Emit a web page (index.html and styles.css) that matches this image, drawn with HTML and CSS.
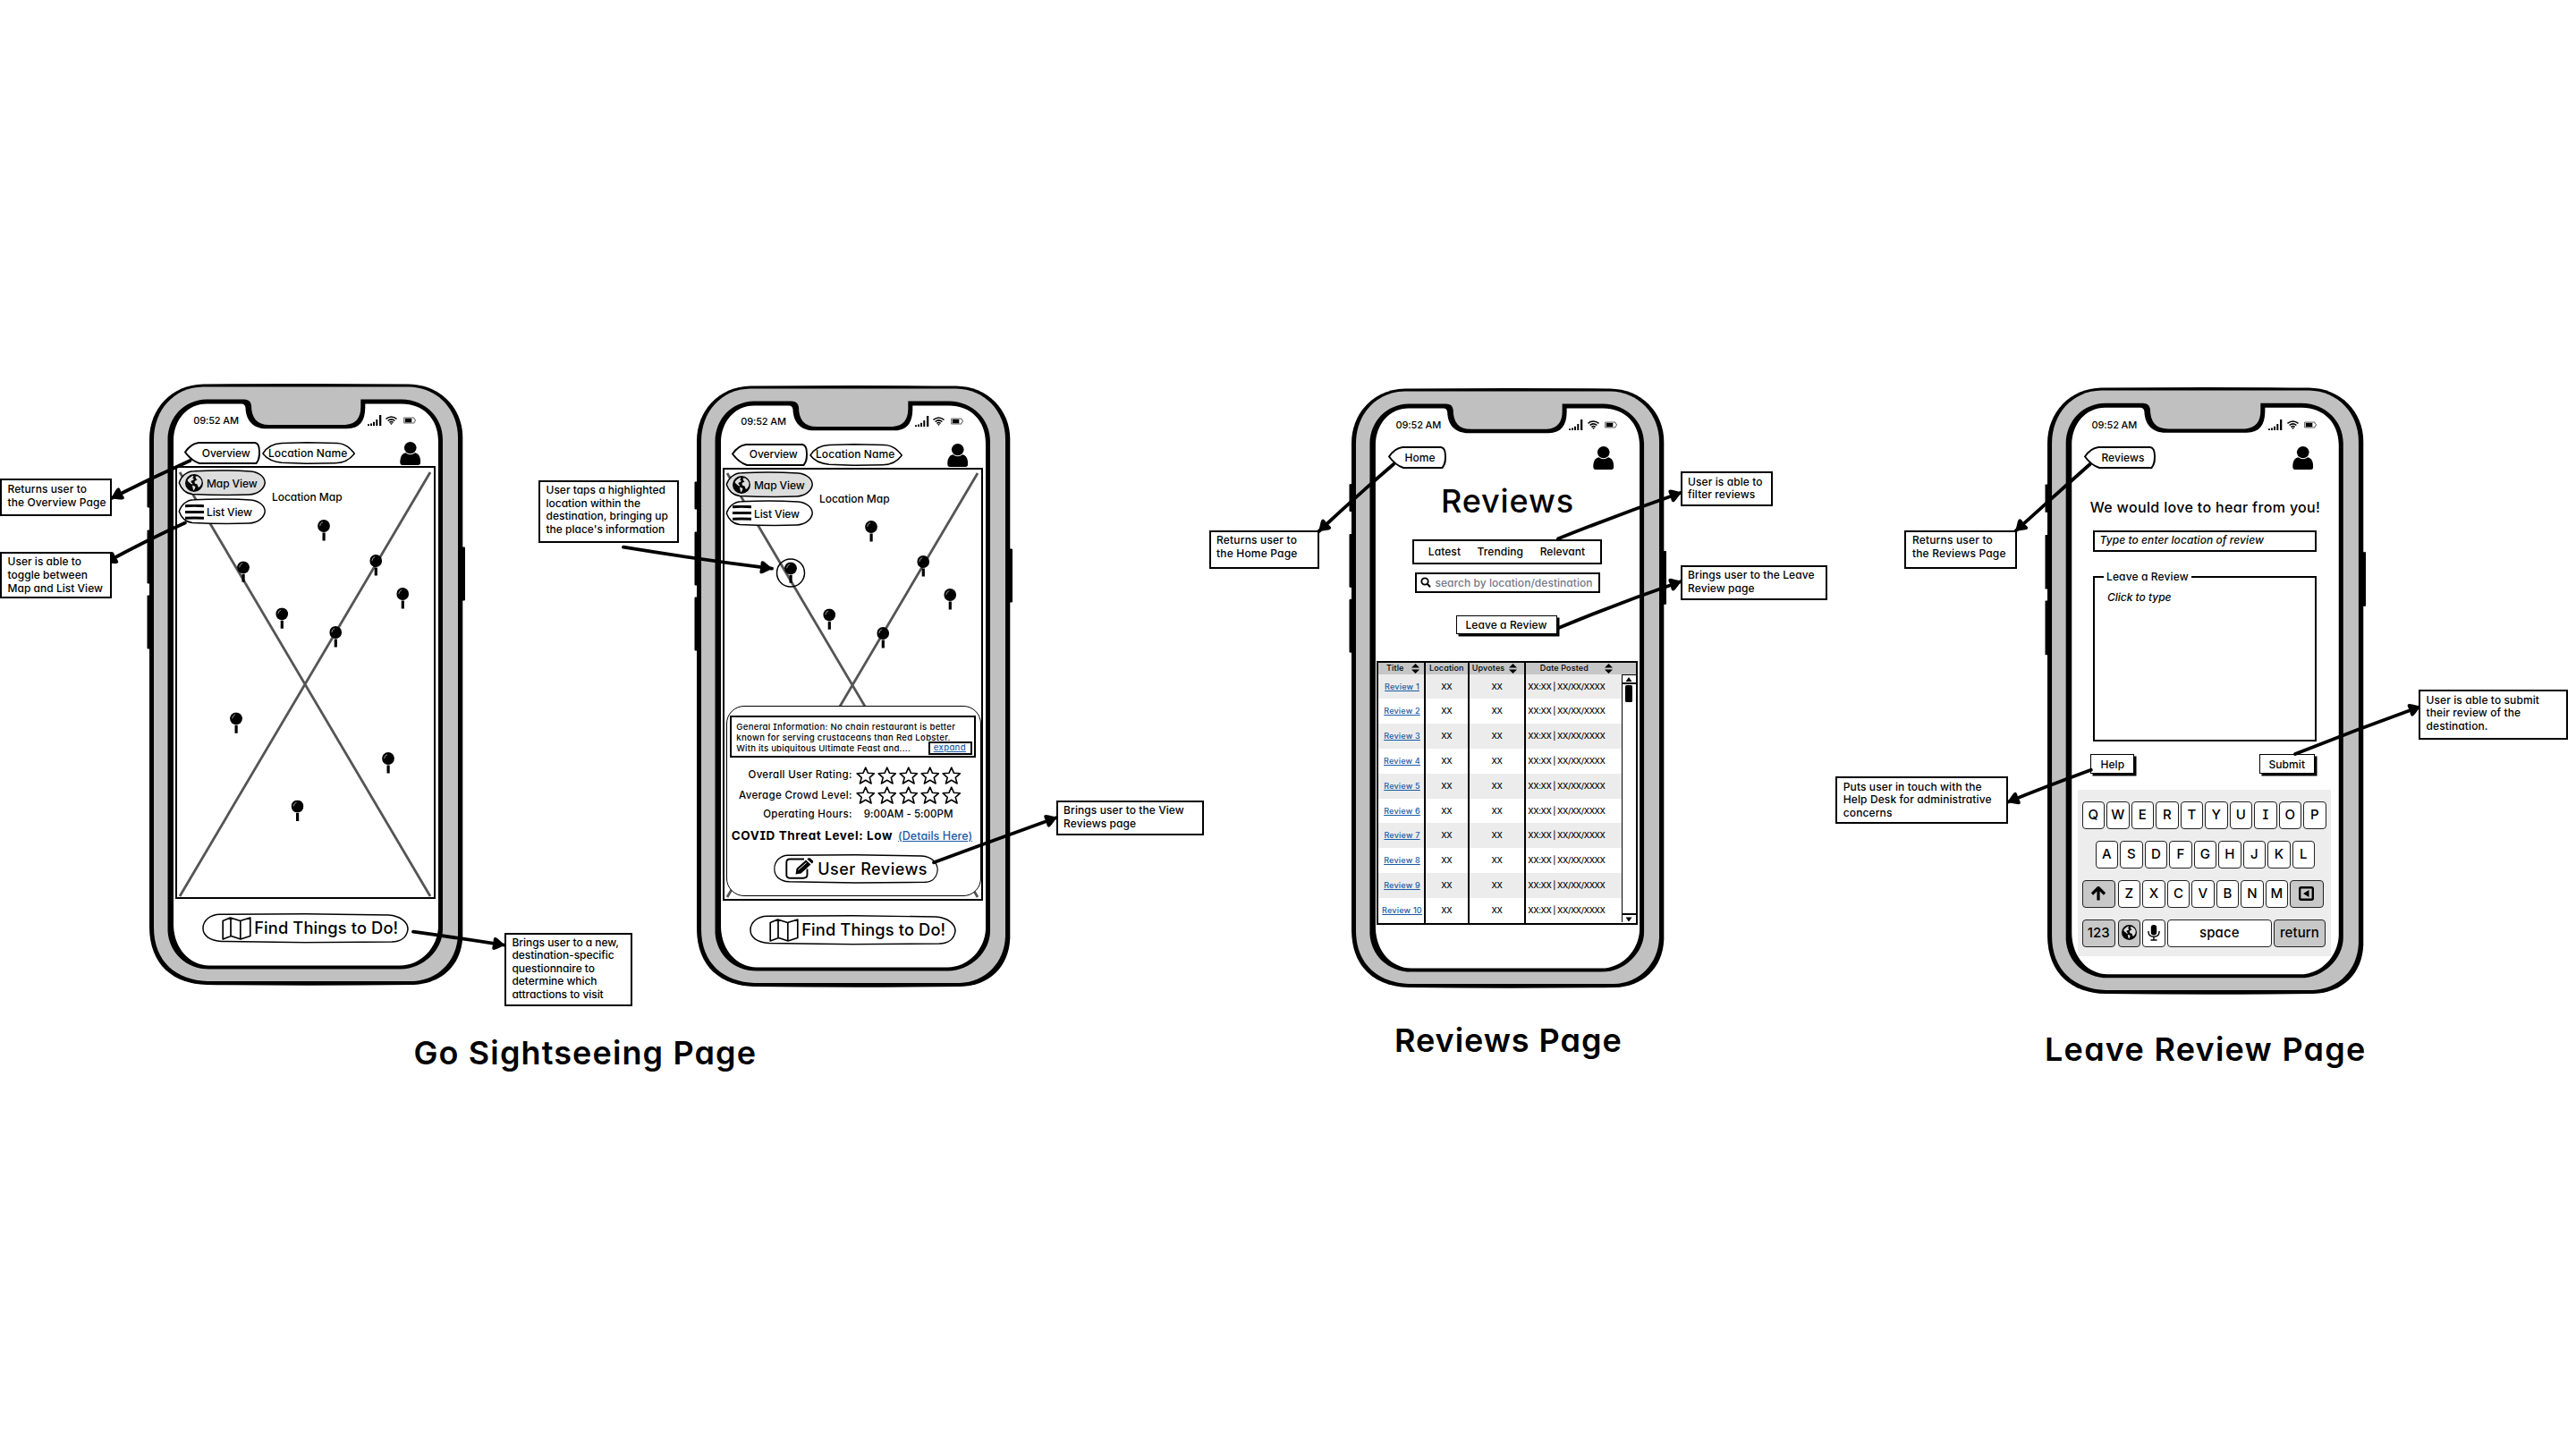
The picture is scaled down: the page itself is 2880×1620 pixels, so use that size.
FILE: index.html
```html
<!DOCTYPE html>
<html lang="en">
<head>
<meta charset="utf-8">
<title>Travel app wireframes</title>
<link rel="stylesheet" href="styles.css">
</head>
<body>
<svg class="defs" aria-hidden="true">
  <symbol id="frame" viewBox="0 0 356 673" preserveAspectRatio="none">
    <path d="M1 108h4v30H1zM1 164h4v59H1zM1 237h4v59H1zM351 183h4.5v59H351z" stroke="#000" stroke-linejoin="round"/>
    <path d="M63 .5 Q178 -.5 293 .5C328 1 353.300 27 353.300 60V618C352 650 330 671 298 672Q178 673.500 67 672C30 671 3.500 650 3 608V62C3 28 28 1 63 .5Z"/>
    <path fill="#c0c0c0" d="M63 3.500H293C325 4 348 29 348 60V616C347 645 326 667 297 668H68C33 667 8 646 8 608V62C8 30 30 4 63 3.500Z"/>
    <path d="M67 17.500H109Q116 17.500 117 24C117 38 123 46 137 46H222C234 45 239.300 38 239.300 26V17.500H285C312 18 331 38 331 62V610C331 633 309 654.500 284 654.500H70C44 654.500 25 636 23.500 612V62C24 37 42 18 67 17.500Z"/>
    <path fill="#fff" d="M67 22.500H106Q110 22.500 110.500 27C111 42 120 50.300 134 50.300H224C238 50 244 42 244.300 27V22.500H285C309 22.500 326 39 326 64V608C325 630 307 650.500 283 650.500H70C48 650 31 632 30 606V64C30 40 46 22.500 67 22.500Z"/>
  </symbol>
  <symbol id="signal" viewBox="0 0 16 12"><path d="M0 10.300h2V12H0zM3 9.600h2V12H3zM6 7.800h2V12H6zM9.300 5h2v7h-2zM13 0h2.300v12H13z"/></symbol>
  <symbol id="wifi" viewBox="0 0 13 10"><path d="M.5 3.300Q6.500 -1.500 12.500 3.300M2.600 5.500Q6.500 2.200 10.400 5.500M4.400 7.400Q6.500 5.800 8.600 7.400" fill="none" stroke="#000" stroke-width="1.500"/><path d="M5 8.300h3L6.500 9.900z"/></symbol>
  <symbol id="battery" viewBox="0 0 14 8"><path d="M.6 1H12V2.500Q13.500 2.500 13.500 4T12 5.500V7H.6Z" fill="none" stroke="#555" stroke-width=".9"/><path d="M1.800 1.800h7.500v4.500H1.800z"/></symbol>
  <symbol id="user" viewBox="0 0 24 26" preserveAspectRatio="none"><ellipse cx="12" cy="6.600" rx="7" ry="6.600"/><path d="M6.500 12.300Q12 16 17.500 12.300C21.500 13 23.800 17 23.700 23Q23.600 26 21 26H3Q.4 26 .3 23C.2 17 2.500 13 6.500 12.300Z"/></symbol>
  <symbol id="globe" viewBox="0 0 20 20"><circle cx="10" cy="10" r="10"/><path fill="#ddd" d="M5 4L8.500 1.800L9.500 3L8 4.500L10 5.500L8 7.500L7 7L6.500 9L8.500 11L7 11.500L3.500 8.500L2.500 6.800ZM11.500 2.500L14 2.500L17 5L18.500 8L18.300 11L16.500 14L14.800 15L13.500 11.500L10.800 10.500L10.500 8L13.500 6.500L12 5ZM8 12.500L11.500 14L10.500 17L9.500 18.500L8.500 16Z"/></symbol>
  <symbol id="list" viewBox="0 0 21 17"><path d="M0 1.700Q10 .8 21 1.700M0 8.500H21M0 15.300Q10 14.600 21 15.300" fill="none" stroke="#000" stroke-width="3"/></symbol>
  <symbol id="map" viewBox="0 0 33 26" preserveAspectRatio="none"><path d="M1.200 4.500L9.500 1L20.500 4.500L31.800 1V21.500L21 25L10.500 21.500L1.200 25ZM10 1V21.500M20.800 4.500V25" fill="none" stroke="#000" stroke-width="1.700" stroke-linejoin="round"/></symbol>
  <symbol id="edit" viewBox="0 0 32 24" preserveAspectRatio="none"><path d="M21 1.500H5Q1.300 1.500 1.300 5V19Q1.300 22.700 5 22.700H20Q24.500 22.700 24.500 19V12.500" fill="none" stroke="#000" stroke-width="1.900"/><path d="M11.500 18.500L12.500 12L23 2.500L28.500 7.500L17.500 17.500ZM24.300 1.500Q26 -.4 28 .6L31 3.500Q31.800 5 29.800 6.600Z"/><path d="M14.500 13.500L23.500 5.500" stroke="#fff" stroke-width="1"/></symbol>
  <symbol id="star" viewBox="0 0 22 20" preserveAspectRatio="none"><path d="M11 1.200L13.800 7.300L20.800 7.800L15.600 12.300L17.500 19L11 15.300L4.500 19L6.400 12.300L1.200 7.800L8.200 7.300Z" fill="none" stroke="#000" stroke-width="1.600" stroke-linejoin="round"/></symbol>
  <symbol id="pin" viewBox="0 0 14 24"><ellipse cx="7" cy="7" rx="6.900" ry="6.900"/><path d="M5.500 14.500h3.200V23.500h-3.200z"/><path d="M2.600 7Q3 3.500 6 2.600" fill="none" stroke="#aaa" stroke-width=".9"/></symbol>
  <symbol id="search" viewBox="0 0 12 12"><circle cx="5" cy="5" r="3.700" fill="none" stroke="#000" stroke-width="1.800"/><path d="M7.500 7.500L11 11.300" stroke="#000" stroke-width="2"/></symbol>
  <symbol id="sort" viewBox="0 0 9 11" preserveAspectRatio="none"><path d="M4.500 0L9 4.500H0ZM0 6.500H9L4.500 11Z"/></symbol>
  <symbol id="shift" viewBox="0 0 18 16"><path d="M9 1V15.500M2 8.500L9 1.500L16 8.500" fill="none" stroke="#000" stroke-width="3.200" stroke-linejoin="round"/></symbol>
  <symbol id="erase" viewBox="0 0 17 16" preserveAspectRatio="none"><rect x="1.200" y="1.200" width="14.600" height="13.600" rx="1.500" fill="none" stroke="#000" stroke-width="2.400"/><path d="M11.500 4V12L5 8Z"/></symbol>
  <symbol id="mic" viewBox="0 0 14 18"><rect x="3.800" y="0" width="6.400" height="11.500" rx="3.200"/><path d="M1 7V8.500Q1.500 13.200 7 13.200T13 8.500V7M7 13V16.500M3.500 17H10.500" fill="none" stroke="#000" stroke-width="1.400"/></symbol>
  <symbol id="shape-name" viewBox="0 0 104 25"><path d="M1 13C4 8 9 2 22 1.500L50 .8L84 1.500C94 2 99 8 103.300 13C99 19 92 23.500 82 23.700L50 24.300L22 23.300C11 22 5 19 1 13Z" fill="#fff" stroke="#000" stroke-width="1.500"/></symbol>
  <symbol id="shape-back" viewBox="0 0 85 25"><path d="M1 11.500C4 7 9 2 16 1L79 1C83 1.500 84 5 84 11C84 16 84 20 80.500 24L17 24C11 22 5 17 1 11.500Z" fill="#fff" stroke="#000" stroke-width="1.900"/></symbol>
  <symbol id="shape-home" viewBox="0 0 65 25"><path d="M1 11.500C4 7 9 2 16 1L59 1C63 1.500 64 5 64 11C64 16 64 20 60.500 24L17 24C11 22 5 17 1 11.500Z" fill="#fff" stroke="#000" stroke-width="1.900"/></symbol>
  <symbol id="shape-reviews" viewBox="0 0 80 25"><path d="M1 11.500C4 7 9 2 16 1L74 1C78 1.500 79 5 79 11C79 16 79 20 75.500 24L17 24C11 22 5 17 1 11.500Z" fill="#fff" stroke="#000" stroke-width="1.900"/></symbol>
  <symbol id="shape-tab" viewBox="0 0 99 30"><path d="M1 15C3 8 9 2 18 1.800Q50 0 82 2C92 3 98 9 98 15C97 22 90 28 80 28.300Q50 29.500 16 27.700C8 27 3 21 1 15Z" stroke="#000" stroke-width="1.500"/></symbol>
  <symbol id="shape-cta" viewBox="0 0 231 34" preserveAspectRatio="none"><path d="M1 17C1 8 9 1.500 20 1.300L115 .8L208 2C222 3 230 10 230 18C229 27 222 32 212 32.300L115 33L22 31.700C8 31 1 25 1 17Z" fill="#fff" stroke="#000" stroke-width="1.500"/></symbol>
  <symbol id="pins" viewBox="0 0 290 484">
    <path d="M5 6L285 480M285 6L5 480" stroke="#555" stroke-width="2.800"/>
    <use href="#pin" x="159" y="59" width="14" height="24"/>
    <use href="#pin" x="69" y="105.300" width="14" height="24"/>
    <use href="#pin" x="217.200" y="98" width="14" height="24"/>
    <use href="#pin" x="247.200" y="135" width="14" height="24"/>
    <use href="#pin" x="112.200" y="157.300" width="14" height="24"/>
    <use href="#pin" x="172.200" y="178" width="14" height="24"/>
    <use href="#pin" x="61" y="274.300" width="14" height="24"/>
    <use href="#pin" x="231" y="319" width="14" height="24"/>
    <use href="#pin" x="129.500" y="372.500" width="14" height="24"/>
  </symbol>
</svg>

<main class="board">

  <section class="phone phone-map">
    <svg class="frame"><use href="#frame"/></svg>
    <div class="status"><span>09:52 AM</span><svg class="i-signal"><use href="#signal"/></svg><svg class="i-wifi"><use href="#wifi"/></svg><svg class="i-battery"><use href="#battery"/></svg></div>
    <nav class="nav">
      <a class="shaped back"><svg><use href="#shape-back"/></svg><span>Overview</span></a>
      <a class="shaped place"><svg><use href="#shape-name"/></svg><span>Location Name</span></a>
      <svg class="i-user"><use href="#user"/></svg>
    </nav>
    <div class="map">
      <svg class="pins"><use href="#pins"/></svg>
      <a class="shaped view active"><svg><use href="#shape-tab"/></svg><svg class="i-globe"><use href="#globe"/></svg><span>Map View</span></a>
      <a class="shaped view"><svg><use href="#shape-tab"/></svg><svg class="i-list"><use href="#list"/></svg><span>List View</span></a>
      <span class="map-label">Location Map</span>
    </div>
    <a class="shaped cta"><svg><use href="#shape-cta"/></svg><svg class="i-map"><use href="#map"/></svg><span>Find Things to Do!</span></a>
  </section>

  <section class="phone phone-place">
    <svg class="frame"><use href="#frame"/></svg>
    <div class="status"><span>09:52 AM</span><svg class="i-signal"><use href="#signal"/></svg><svg class="i-wifi"><use href="#wifi"/></svg><svg class="i-battery"><use href="#battery"/></svg></div>
    <nav class="nav">
      <a class="shaped back"><svg><use href="#shape-back"/></svg><span>Overview</span></a>
      <a class="shaped place"><svg><use href="#shape-name"/></svg><span>Location Name</span></a>
      <svg class="i-user"><use href="#user"/></svg>
    </nav>
    <div class="map">
      <svg class="pins"><use href="#pins"/><circle cx="76" cy="117.500" r="15.500" fill="none" stroke="#000" stroke-width="1.500"/></svg>
      <a class="shaped view active"><svg><use href="#shape-tab"/></svg><svg class="i-globe"><use href="#globe"/></svg><span>Map View</span></a>
      <a class="shaped view"><svg><use href="#shape-tab"/></svg><svg class="i-list"><use href="#list"/></svg><span>List View</span></a>
      <span class="map-label">Location Map</span>
      <div class="sheet">
        <div class="info">
          <p class="l1">General Information: No chain restaurant is better</p>
          <p class="l2">known for serving crustaceans than Red Lobster.</p>
          <p class="l3">With its ubiquitous Ultimate Feast and....</p>
          <a class="expand">expand</a>
        </div>
        <div class="rate"><span class="rate-name">Overall User Rating:</span><span class="stars"><svg><use href="#star"/></svg><svg><use href="#star"/></svg><svg><use href="#star"/></svg><svg><use href="#star"/></svg><svg><use href="#star"/></svg></span></div>
        <div class="rate"><span class="rate-name">Average Crowd Level:</span><span class="stars"><svg><use href="#star"/></svg><svg><use href="#star"/></svg><svg><use href="#star"/></svg><svg><use href="#star"/></svg><svg><use href="#star"/></svg></span></div>
        <div class="rate hours"><span class="rate-name">Operating Hours:</span><span class="time">9:00AM - 5:00PM</span></div>
        <div class="covid"><b>COVID Threat Level: Low</b><a class="link">(Details Here)</a></div>
        <a class="shaped user-reviews"><svg><use href="#shape-cta"/></svg><svg class="i-edit"><use href="#edit"/></svg><span>User Reviews</span></a>
      </div>
    </div>
    <a class="shaped cta"><svg><use href="#shape-cta"/></svg><svg class="i-map"><use href="#map"/></svg><span>Find Things to Do!</span></a>
  </section>

  <section class="phone phone-reviews">
    <svg class="frame"><use href="#frame"/></svg>
    <div class="status"><span>09:52 AM</span><svg class="i-signal"><use href="#signal"/></svg><svg class="i-wifi"><use href="#wifi"/></svg><svg class="i-battery"><use href="#battery"/></svg></div>
    <nav class="nav">
      <a class="shaped home"><svg><use href="#shape-home"/></svg><span>Home</span></a>
      <svg class="i-user"><use href="#user"/></svg>
    </nav>
    <h1 class="title">Reviews</h1>
    <div class="tabs"><span>Latest</span><span>Trending</span><span>Relevant</span></div>
    <div class="search"><svg><use href="#search"/></svg><span>search by location/destination</span></div>
    <button class="btn leave">Leave a Review</button>
    <table class="reviews">
      <colgroup><col class="c-title"><col class="c-loc"><col class="c-up"><col class="c-date"><col class="c-bar"></colgroup>
      <thead><tr><th><div class="th t1">Title<svg><use href="#sort"/></svg></div></th><th>Location</th><th><div class="th t2">Upvotes<svg><use href="#sort"/></svg></div></th><th class="open"><div class="th t3">Date Posted<svg><use href="#sort"/></svg></div></th><th class="open"></th></tr></thead>
      <tbody>
        <tr><td><a class="link">Review 1</a></td><td>XX</td><td>XX</td><td class="date">XX:XX | XX/XX/XXXX</td><td class="bar" rowspan="10"><div class="scroll"><i class="up"></i><i class="thumb"></i><i class="down"></i></div></td></tr>
        <tr><td><a class="link">Review 2</a></td><td>XX</td><td>XX</td><td class="date">XX:XX | XX/XX/XXXX</td></tr>
        <tr><td><a class="link">Review 3</a></td><td>XX</td><td>XX</td><td class="date">XX:XX | XX/XX/XXXX</td></tr>
        <tr><td><a class="link">Review 4</a></td><td>XX</td><td>XX</td><td class="date">XX:XX | XX/XX/XXXX</td></tr>
        <tr><td><a class="link">Review 5</a></td><td>XX</td><td>XX</td><td class="date">XX:XX | XX/XX/XXXX</td></tr>
        <tr><td><a class="link">Review 6</a></td><td>XX</td><td>XX</td><td class="date">XX:XX | XX/XX/XXXX</td></tr>
        <tr><td><a class="link">Review 7</a></td><td>XX</td><td>XX</td><td class="date">XX:XX | XX/XX/XXXX</td></tr>
        <tr><td><a class="link">Review 8</a></td><td>XX</td><td>XX</td><td class="date">XX:XX | XX/XX/XXXX</td></tr>
        <tr><td><a class="link">Review 9</a></td><td>XX</td><td>XX</td><td class="date">XX:XX | XX/XX/XXXX</td></tr>
        <tr><td><a class="link">Review 10</a></td><td>XX</td><td>XX</td><td class="date">XX:XX | XX/XX/XXXX</td></tr>
      </tbody>
    </table>
  </section>

  <section class="phone phone-leave">
    <svg class="frame"><use href="#frame"/></svg>
    <div class="status"><span>09:52 AM</span><svg class="i-signal"><use href="#signal"/></svg><svg class="i-wifi"><use href="#wifi"/></svg><svg class="i-battery"><use href="#battery"/></svg></div>
    <nav class="nav">
      <a class="shaped to-reviews"><svg><use href="#shape-reviews"/></svg><span>Reviews</span></a>
      <svg class="i-user"><use href="#user"/></svg>
    </nav>
    <h2 class="hello">We would love to hear from you!</h2>
    <div class="field">Type to enter location of review</div>
    <fieldset class="box"><legend>Leave a Review</legend><p>Click to type</p></fieldset>
    <div class="actions"><button class="btn help">Help</button><button class="btn submit">Submit</button></div>
    <div class="keyboard">
      <div class="keys"><kbd>Q</kbd><kbd>W</kbd><kbd>E</kbd><kbd>R</kbd><kbd>T</kbd><kbd>Y</kbd><kbd>U</kbd><kbd>I</kbd><kbd>O</kbd><kbd>P</kbd></div>
      <div class="keys mid"><kbd>A</kbd><kbd>S</kbd><kbd>D</kbd><kbd>F</kbd><kbd>G</kbd><kbd>H</kbd><kbd>J</kbd><kbd>K</kbd><kbd>L</kbd></div>
      <div class="keys"><kbd class="dark side"><svg class="i-shift"><use href="#shift"/></svg></kbd><kbd>Z</kbd><kbd>X</kbd><kbd>C</kbd><kbd>V</kbd><kbd>B</kbd><kbd>N</kbd><kbd>M</kbd><kbd class="dark side"><svg class="i-erase"><use href="#erase"/></svg></kbd></div>
      <div class="keys"><kbd class="dark side">123</kbd><kbd class="dark"><svg class="i-world"><use href="#globe"/></svg></kbd><kbd><svg class="i-mic"><use href="#mic"/></svg></kbd><kbd class="space">space</kbd><kbd class="dark return">return</kbd></div>
    </div>
  </section>

  <svg class="arrows" viewBox="0 0 2880 1620">
    <defs><marker id="head" viewBox="0 0 14 14" refX="13" refY="7" markerWidth="15" markerHeight="15" markerUnits="userSpaceOnUse" orient="auto"><path d="M1.500 .6Q3 -.2 6 2L13.500 7L6 12Q3 14.200 1.500 13.400Q0 12 1.500 7Q0 2 1.500 .6Z"/></marker></defs>
    <g class="lines">
      <path d="M212.500 515Q168 535 124.600 557"/>
      <path d="M207 584.500Q162 605 118 629"/>
      <path d="M462 1041.700Q512 1048.500 564 1056.700"/>
      <path d="M697 611.700Q778 625 863 635.700"/>
      <path d="M1044 964.300Q1112 939 1181.400 914"/>
      <path d="M1558 519Q1516 555 1474.500 594"/>
      <path d="M1742 602.300Q1810 575 1879.500 550.700"/>
      <path d="M1742 702.300Q1810 674 1879.500 650"/>
      <path d="M2336.600 519Q2296 555 2253.500 593.700"/>
      <path d="M2337.800 860.700Q2291 878 2244.600 896.700"/>
      <path d="M2566 843Q2635 815.500 2705.800 790"/>
    </g>
  </svg>

  <aside class="note n1">Returns user to<br>the Overview Page</aside>
  <aside class="note n2">User is able to<br>toggle between<br>Map and List View</aside>
  <aside class="note n3">Brings user to a new,<br>destination-specific<br>questionnaire to<br>determine which<br>attractions to visit</aside>
  <aside class="note n4">User taps a highlighted<br>location within the<br>destination, bringing up<br>the place's information</aside>
  <aside class="note n5">Brings user to the View<br>Reviews page</aside>
  <aside class="note n6">Returns user to<br>the Home Page</aside>
  <aside class="note n7">User is able to<br>filter reviews</aside>
  <aside class="note n8">Brings user to the Leave<br>Review page</aside>
  <aside class="note n9">Returns user to<br>the Reviews Page</aside>
  <aside class="note n10">Puts user in touch with the<br>Help Desk for administrative<br>concerns</aside>
  <aside class="note n11">User is able to submit<br>their review of the<br>destination.</aside>

  <h3 class="caption cap1">Go Sightseeing Page</h3>
  <h3 class="caption cap2">Reviews Page</h3>
  <h3 class="caption cap3">Leave Review Page</h3>
</main>
</body>
</html>
```
FILE: styles.css
```css
* { box-sizing: border-box; }
body { margin: 0; background: #fff; color: #000; font: 500 12px/15px Inter, "Liberation Sans", sans-serif; letter-spacing: .08px; font-feature-settings: "cv11", "cv08"; white-space: nowrap; }
h1, h2, h3, p { margin: 0; font-weight: 500; }
svg { display: block; flex: none; }
button, kbd { font: inherit; letter-spacing: inherit; font-feature-settings: inherit; color: inherit; }
.defs { position: absolute; width: 0; height: 0; }
.board { position: relative; width: 2880px; height: 1620px; overflow: hidden; }
.arrows { position: absolute; inset: 0; width: 2880px; height: 1620px; }
.lines path { fill: none; stroke: #000; stroke-width: 3.800px; stroke-linecap: round; marker-end: url(#head); }

/* phones placed on the canvas */
.phone { position: absolute; z-index: 0; display: flex; flex-direction: column; align-items: flex-start; width: 356px; height: 673px; padding-top: 31px; }
.phone-map { left: 163.700px; top: 429px; }
.phone-place { left: 775.700px; top: 430.700px; }
.phone-reviews { left: 1508px; top: 434px; width: 355px; height: 671px; }
.phone-leave { left: 2286px; top: 433px; width: 359px; height: 679px; padding-top: 32.300px; }
.frame { position: absolute; inset: 0; width: 100%; height: 100%; z-index: -1; overflow: visible; }

.status { display: flex; align-items: center; width: 100%; height: 20px; padding: 0 55px 0 52.500px; font-size: 11px; letter-spacing: -.13px; }
.phone-place .status { padding-bottom: 1px; }
.i-signal { width: 16px; height: 12px; margin-left: auto; }
.i-wifi { width: 13px; height: 10px; margin: 0 6.500px 0 4.700px; }
.i-battery { width: 14px; height: 8px; }

.nav { display: flex; width: 100%; height: 26px; margin-top: 14px; padding: 0 49.500px 0 42.300px; }
.i-user { width: 23.500px; height: 26px; margin-left: auto; }
.phone-reviews .nav, .phone-leave .nav { padding: 0 58.500px 0 43.700px; }

.shaped { position: relative; display: flex; align-items: center; }
.shaped > svg:first-child { position: absolute; inset: 0; width: 100%; height: 100%; overflow: visible; }
.shaped > :not(:first-child) { position: relative; }
.back { width: 85px; height: 25px; padding-left: 19.800px; padding-bottom: .5px; margin-right: 1.800px; letter-spacing: -.08px; }
.place { width: 104px; height: 25px; padding-left: 7.200px; padding-bottom: .5px; }
.home { width: 65px; height: 25px; padding-left: 18.700px; padding-bottom: 1px; }
.to-reviews { width: 80px; height: 25px; padding-left: 19.700px; padding-bottom: 1px; }

/* map screen */
.map { position: relative; width: 291px; height: 484px; margin: 1px 0 0 32.300px; padding: 2.200px 0 0 1.500px; border: 2px solid #000; display: flex; flex-direction: column; gap: 2.500px; }
.pins { position: absolute; left: -1.500px; top: -1.500px; width: 290px; height: 484px; }
.view { width: 98.500px; height: 29.700px; padding-left: 7.500px; letter-spacing: -.1px; fill: #fff; }
.view.active > svg:first-child { fill: #ddd; }
.i-globe { width: 20px; height: 20px; margin-right: 4px; fill: #000; }
.i-list { width: 21px; height: 17px; margin-right: 3px; }
.view span { padding-top: 1px; }
.map-label { position: absolute; left: 106px; top: 25.200px; letter-spacing: -.03px; }
.cta { width: 231px; height: 33.700px; margin: 16px 0 0 62.500px; padding-left: 22px; font-size: 18.300px; letter-spacing: .12px; }
.i-map { width: 33px; height: 26px; margin-right: 3px; }

/* place details card laid over the map */
.sheet { position: absolute; left: 1.800px; top: 264.200px; width: 285.500px; height: 213.500px; border: 1.500px solid #000; border-radius: 20px; background: #fff; padding: 10.300px 0 0 3.500px; }
.info { position: relative; width: 275px; height: 47px; border: 2px solid #000; padding: 4.500px 0 0 5px; font-size: 9.600px; line-height: 12.200px; }
.l1 { letter-spacing: .3px; }
.l2 { letter-spacing: .29px; }
.l3 { letter-spacing: .21px; }
.expand { position: absolute; right: 2.500px; bottom: 1px; width: 49px; height: 15.500px; border: 2px solid #000; line-height: 10px; padding-left: 4px; color: #1c5ba5; text-decoration: underline; text-underline-offset: 1px; letter-spacing: .3px; }
.rate { display: flex; align-items: center; height: 22.500px; font-size: 11.500px; letter-spacing: .32px; }
.info + .rate { margin-top: 8.400px; }
.rate-name { width: 136.500px; text-align: right; }
.stars { display: flex; gap: 2.500px; margin-left: 4.500px; }
.stars svg { width: 21.500px; height: 20px; }
.hours { height: 20px; }
.time { margin-left: 13px; letter-spacing: .05px; }
.covid { display: flex; align-items: baseline; gap: 6px; margin: 3px 0 0 1.500px; line-height: 20px; font-size: 12.500px; letter-spacing: .05px; }
.covid b { font-size: 13.500px; font-weight: 700; letter-spacing: .6px; }
.link { color: #1c5ba5; text-decoration: underline; }
.user-reviews { width: 184px; height: 33px; margin: 10px 0 0 49px; padding-left: 12.500px; font-size: 18px; letter-spacing: .5px; }
.i-edit { width: 32px; height: 24px; margin-right: 4.500px; }

/* reviews screen */
.title { width: 100%; margin-top: 14.500px; text-align: center; font-size: 36px; line-height: 40px; letter-spacing: .9px; }
.tabs { display: flex; align-items: center; gap: 18.500px; width: 212px; height: 28.700px; margin: 23px 0 0 71.300px; padding: 0 0 1px 15.500px; border: 2px solid #000; }
.search { display: flex; align-items: center; gap: 4.500px; width: 206.500px; height: 22.500px; margin: 9px 0 0 74px; padding-left: 4px; border: 2px solid #000; color: #778; letter-spacing: .04px; }
.search svg { width: 12px; height: 12px; }
.btn { padding: 0; border: 1.600px solid #000; background: #fff; box-shadow: 2.500px 2.500px 0 #000; text-align: center; }
.leave { width: 113px; height: 21.500px; margin: 25px 0 0 119.500px; }
.reviews { table-layout: fixed; width: 292px; margin: 30px 0 0 30.500px; border: 2px solid #000; border-spacing: 0; font-size: 9px; line-height: 11px; letter-spacing: .15px; text-align: center; }
.c-title { width: 53px; } .c-loc { width: 49.700px; } .c-up { width: 62.600px; } .c-bar { width: 15.500px; }
th, td { padding: 0; border-right: 2px solid #000; font-weight: 500; }
th { height: 12.500px; background: #c6c6c6; line-height: 10px; }
td { height: 27.800px; padding-bottom: 1px; vertical-align: middle; }
.open, td.date, td.bar { border-right: 0; }
tbody tr:nth-child(odd) td { background: #ececec; }
td { letter-spacing: -.25px; }
td .link { letter-spacing: .22px; margin-left: 3px; }
td.date { text-align: left; padding-left: 2.500px; letter-spacing: -.38px; }
.th { display: flex; align-items: center; justify-content: space-between; }
.th svg { width: 9px; height: 11px; }
.t1 { padding: 0 5px 0 9.500px; }
.t2 { padding: 0 8px 0 2.500px; }
.t3 { padding: 0 10px 0 16px; }
tbody tr td.bar { background: #fff; padding: 0; }
.scroll { display: flex; flex-direction: column; width: 15.500px; height: 277.500px; border: 1.500px solid #000; border-right: 0; border-bottom: 0; }
.scroll i { display: block; }
.up, .down { height: 10px; border-bottom: 2px solid #000; }
.up::before, .down::before { content: ""; display: block; width: 7px; height: 5px; margin: 2px auto 0 3.500px; background: #000; clip-path: polygon(50% 0, 100% 100%, 0 100%); }
.down { margin-top: auto; border-bottom: 0; border-top: 2px solid #000; }
.down::before { clip-path: polygon(0 0, 100% 0, 50% 100%); }
.thumb { width: 7.500px; height: 18.500px; margin: 1.500px 0 0 3px; border-radius: 1.500px; background: #000; }

/* leave-a-review screen */
.hello { width: 100%; margin-top: 32px; text-align: center; font-size: 16px; line-height: 20px; letter-spacing: .34px; }
.field { width: 250px; height: 24.500px; margin: 15.500px 0 0 53.500px; padding-left: 6px; border: 2px solid #000; line-height: 18.500px; font-style: italic; letter-spacing: .07px; }
.box { width: 250px; height: 192px; margin: 20px 0 0 53.500px; padding: 7.500px 0 0 14.500px; border: 2px solid #000; }
.box legend { margin-left: -4.500px; padding: 0 3px 0 3.500px; letter-spacing: .13px; }
.box p { font-style: italic; letter-spacing: -.02px; }
.actions { display: flex; justify-content: space-between; width: 250.500px; margin: 13.500px 0 0 51.300px; }
.help { width: 49px; height: 22.500px; }
.submit { width: 62px; height: 22.500px; }
.keyboard { display: flex; flex-direction: column; gap: 13.200px; width: 282.700px; height: 185.600px; margin: 17.700px 0 0 37.300px; padding: 12.600px 0 0 4.300px; background: #ededed; }
.keys { display: flex; gap: 2px; }
.mid { padding-left: 15px; }
kbd { display: flex; align-items: center; justify-content: center; width: 25.500px; height: 31px; padding-bottom: 1.500px; border: 1.400px solid #222; border-radius: 4px; background: #fff; font-size: 15px; }
kbd.dark { background: #c8c8c8; }
kbd.side { width: 37.400px; margin-right: .7px; }
kbd.space { width: 117.300px; }
kbd.return { width: 58px; }
.i-shift { width: 18px; height: 16px; }
.i-erase { width: 17px; height: 16px; }
.i-world { width: 17px; height: 17px; }
.i-mic { width: 14px; height: 18px; }

/* annotations */
.note { position: absolute; padding: 2.300px 0 0 6.500px; border: 2px solid #000; background: #fff; line-height: 14.800px; }
.n1 { left: 0; top: 535px; width: 124.600px; height: 42px; padding-top: 3.300px; }
.n2 { left: 0; top: 617px; width: 124.600px; height: 52px; letter-spacing: .02px; }
.n3 { left: 564px; top: 1042.700px; width: 143px; height: 82px; line-height: 14.500px; letter-spacing: -.05px; }
.n4 { left: 602px; top: 537px; width: 157px; height: 70px; line-height: 14.600px; letter-spacing: 0; }
.n5 { left: 1180.600px; top: 894.700px; width: 165px; height: 39px; }
.n6 { left: 1351.500px; top: 593px; width: 123.500px; height: 42.700px; letter-spacing: .18px; }
.n7 { left: 1878.600px; top: 527.300px; width: 103px; height: 38.700px; }
.n8 { left: 1878.600px; top: 632px; width: 164.500px; height: 38.700px; }
.n9 { left: 2129.400px; top: 592.700px; width: 125.400px; height: 43px; letter-spacing: .18px; }
.n10 { left: 2052.300px; top: 868.300px; width: 192.500px; height: 52.500px; letter-spacing: .1px; }
.n11 { left: 2704px; top: 771.300px; width: 167px; height: 56px; letter-spacing: .1px; }
.caption { position: absolute; font-size: 36px; line-height: 40px; font-weight: 560; }
.cap1 { left: 462.500px; top: 1156.700px; letter-spacing: 1.120px; }
.cap2 { left: 1559px; top: 1142.900px; letter-spacing: .95px; }
.cap3 { left: 2286px; top: 1153px; letter-spacing: 1.250px; }
```
